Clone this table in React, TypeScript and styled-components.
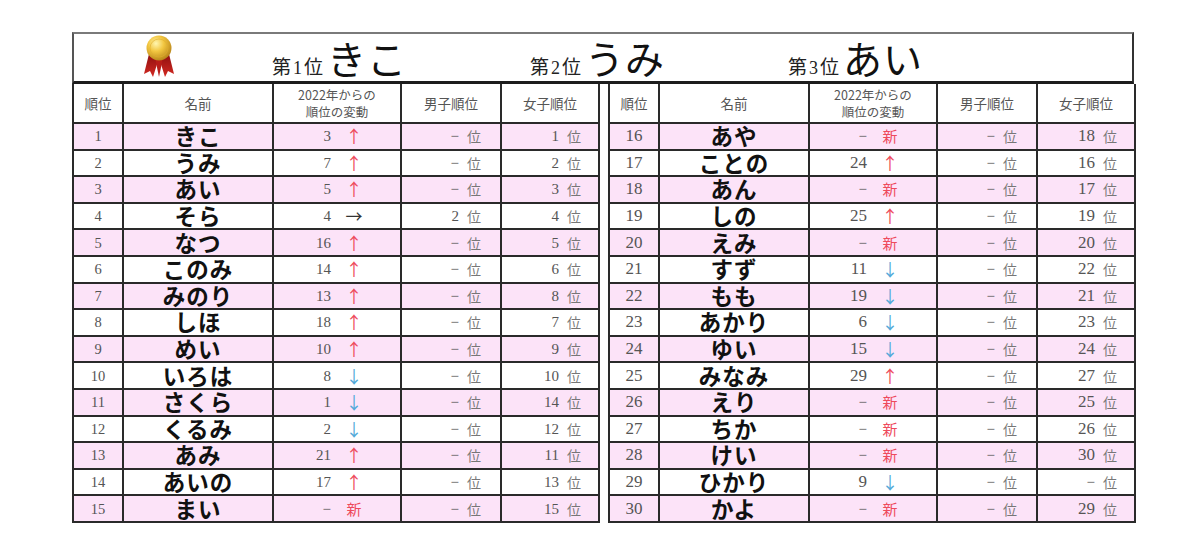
import React from "react";
import styled, { createGlobalStyle } from "styled-components";

type Move = "up" | "down" | "flat" | "new";

type Row = {
  rank: number;
  name: string;
  prev: number | null;
  move: Move;
  boy: number | null;
  girl: number | null;
};

const GlobalStyle = createGlobalStyle`
  html, body {
    margin: 0;
    padding: 0;
    background: #ffffff;
  }
  body {
    font-family: "Liberation Serif", "Noto Sans CJK JP", serif;
    color: #222;
  }
`;

const Page = styled.div`
  padding: 32px 0 0 72px;
  width: 1062px;
`;

const TitleBand = styled.div`
  box-sizing: border-box;
  height: 52px;
  border-top: 2px solid #7a7a7a;
  border-left: 2px solid #555;
  border-right: 2px solid #333;
  border-bottom: 3px solid #1c1c1c;
  display: flex;
  align-items: flex-end;
  padding: 0 0 2px 66px;
`;

const Medal = styled.div`
  width: 38px;
  height: 44px;
  margin-bottom: 1px;
  margin-right: 94px;
`;

const Podium = styled.div`
  width: 258px;
  display: flex;
  align-items: baseline;
  font-family: "Noto Sans CJK JP", sans-serif;
`;

const PodiumLabel = styled.span`
  font-size: 19px;
  color: #222;
  margin-right: 4px;
  & b {
    font-family: "Liberation Serif", serif;
    font-weight: 400;
    font-size: 18px;
    margin: 0 2px;
  }
`;

const PodiumName = styled.span`
  font-size: 39px;
  line-height: 44px;
  color: #111;
  letter-spacing: 1px;
`;

const Tables = styled.div`
  display: grid;
  grid-template-columns: 526px 526px;
  column-gap: 10px;
`;

const Table = styled.table`
  width: 526px;
  table-layout: fixed;
  border-collapse: collapse;
  border-left: 2px solid #2a2a2a;
  border-right: 2px solid #2a2a2a;
  border-bottom: 2px solid #2a2a2a;
`;

const HeadCell = styled.th`
  height: 38px;
  padding: 0;
  border: 2px solid #2a2a2a;
  border-top: none;
  font-family: "Noto Sans CJK JP", sans-serif;
  font-weight: 400;
  font-size: 13.5px;
  line-height: 18px;
  color: #555;
  text-align: center;
  background: #fff;
`;

const SmallHead = styled.span`
  display: block;
  font-size: 12.5px;
  line-height: 17px;
`;

const BodyRow = styled.tr<{ $pink: boolean }>`
  background: ${({ $pink }) => ($pink ? "#fce3f8" : "#ffffff")};
`;

const Cell = styled.td`
  padding: 0;
  border: 2px solid #2a2a2a;
  vertical-align: middle;
`;

const CellBox = styled.div<{ $right?: boolean; $pad?: number }>`
  height: 24.6px;
  display: flex;
  align-items: center;
  justify-content: ${({ $right }) => ($right ? "flex-end" : "center")};
  padding-right: ${({ $pad }) => $pad ?? 0}px;
  white-space: nowrap;
  color: #555;
`;

const RankNum = styled.span<{ $big: boolean }>`
  font-family: "Liberation Serif", serif;
  font-size: ${({ $big }) => ($big ? 17 : 14.5)}px;
  line-height: 20px;
  color: #555;
`;

const Name = styled.span`
  font-family: "Noto Sans CJK JP", sans-serif;
  font-weight: 700;
  font-size: 22.5px;
  line-height: 24px;
  margin-bottom: 2px;
  color: #111;
  letter-spacing: 1px;
`;

const Num = styled.span<{ $big: boolean }>`
  font-family: "Liberation Serif", serif;
  font-size: ${({ $big }) => ($big ? 17 : 15)}px;
  line-height: 20px;
  color: #555;
`;

const Dash = styled.span`
  font-family: "Liberation Serif", serif;
  font-size: 15px;
  line-height: 20px;
  color: #555;
`;

const Mark = styled.span<{ $move: Move }>`
  width: 20px;
  margin-left: 13px;
  text-align: center;
  font-family: "Noto Sans CJK JP", sans-serif;
  font-size: ${({ $move }) => ($move === "new" ? 15 : 17)}px;
  line-height: 20px;
  color: ${({ $move }) =>
    $move === "up" || $move === "new"
      ? "#ee4a5c"
      : $move === "down"
      ? "#52a9d9"
      : "#333"};
`;

const Unit = styled.span`
  font-family: "Noto Sans CJK JP", sans-serif;
  font-size: 14px;
  line-height: 20px;
  color: #777;
  margin-left: 8px;
`;

const left: Row[] = [
  { rank: 1, name: "きこ", prev: 3, move: "up", boy: null, girl: 1 },
  { rank: 2, name: "うみ", prev: 7, move: "up", boy: null, girl: 2 },
  { rank: 3, name: "あい", prev: 5, move: "up", boy: null, girl: 3 },
  { rank: 4, name: "そら", prev: 4, move: "flat", boy: 2, girl: 4 },
  { rank: 5, name: "なつ", prev: 16, move: "up", boy: null, girl: 5 },
  { rank: 6, name: "このみ", prev: 14, move: "up", boy: null, girl: 6 },
  { rank: 7, name: "みのり", prev: 13, move: "up", boy: null, girl: 8 },
  { rank: 8, name: "しほ", prev: 18, move: "up", boy: null, girl: 7 },
  { rank: 9, name: "めい", prev: 10, move: "up", boy: null, girl: 9 },
  { rank: 10, name: "いろは", prev: 8, move: "down", boy: null, girl: 10 },
  { rank: 11, name: "さくら", prev: 1, move: "down", boy: null, girl: 14 },
  { rank: 12, name: "くるみ", prev: 2, move: "down", boy: null, girl: 12 },
  { rank: 13, name: "あみ", prev: 21, move: "up", boy: null, girl: 11 },
  { rank: 14, name: "あいの", prev: 17, move: "up", boy: null, girl: 13 },
  { rank: 15, name: "まい", prev: null, move: "new", boy: null, girl: 15 },
];

const right: Row[] = [
  { rank: 16, name: "あや", prev: null, move: "new", boy: null, girl: 18 },
  { rank: 17, name: "ことの", prev: 24, move: "up", boy: null, girl: 16 },
  { rank: 18, name: "あん", prev: null, move: "new", boy: null, girl: 17 },
  { rank: 19, name: "しの", prev: 25, move: "up", boy: null, girl: 19 },
  { rank: 20, name: "えみ", prev: null, move: "new", boy: null, girl: 20 },
  { rank: 21, name: "すず", prev: 11, move: "down", boy: null, girl: 22 },
  { rank: 22, name: "もも", prev: 19, move: "down", boy: null, girl: 21 },
  { rank: 23, name: "あかり", prev: 6, move: "down", boy: null, girl: 23 },
  { rank: 24, name: "ゆい", prev: 15, move: "down", boy: null, girl: 24 },
  { rank: 25, name: "みなみ", prev: 29, move: "up", boy: null, girl: 27 },
  { rank: 26, name: "えり", prev: null, move: "new", boy: null, girl: 25 },
  { rank: 27, name: "ちか", prev: null, move: "new", boy: null, girl: 26 },
  { rank: 28, name: "けい", prev: null, move: "new", boy: null, girl: 30 },
  { rank: 29, name: "ひかり", prev: 9, move: "down", boy: null, girl: null },
  { rank: 30, name: "かよ", prev: null, move: "new", boy: null, girl: 29 },
];

const markText: Record<Move, string> = {
  up: "↑",
  down: "↓",
  flat: "→",
  new: "新",
};

function MedalIcon() {
  return (
    <svg width="38" height="44" viewBox="0 0 38 44">
      <defs>
        <radialGradient id="gold" cx="0.38" cy="0.32" r="0.7">
          <stop offset="0" stopColor="#fff6b0" />
          <stop offset="0.45" stopColor="#f2c640" />
          <stop offset="1" stopColor="#b9861a" />
        </radialGradient>
        <linearGradient id="ribbon" x1="0" y1="0" x2="0" y2="1">
          <stop offset="0" stopColor="#8e0f0f" />
          <stop offset="1" stopColor="#d42a22" />
        </linearGradient>
      </defs>
      <path d="M9 20 L4 40 L10 37 L13 43 L19 24 Z" fill="url(#ribbon)" />
      <path d="M29 20 L34 40 L28 37 L25 43 L19 24 Z" fill="url(#ribbon)" />
      <path d="M15 24 L19 43 L23 24 Z" fill="#b81c18" />
      <circle cx="19" cy="14" r="12.5" fill="url(#gold)" />
      <circle cx="19" cy="14" r="9" fill="none" stroke="#e0ad2e" strokeWidth="1" opacity="0.6" />
    </svg>
  );
}

function RankTable({ rows, big }: { rows: Row[]; big: boolean }) {
  return (
    <Table>
      <colgroup>
        <col style={{ width: 50 }} />
        <col style={{ width: 150 }} />
        <col style={{ width: 128 }} />
        <col style={{ width: 100 }} />
        <col style={{ width: 98 }} />
      </colgroup>
      <thead>
        <tr>
          <HeadCell>順位</HeadCell>
          <HeadCell>名前</HeadCell>
          <HeadCell>
            <SmallHead>2022年からの</SmallHead>
            <SmallHead>順位の変動</SmallHead>
          </HeadCell>
          <HeadCell>男子順位</HeadCell>
          <HeadCell>女子順位</HeadCell>
        </tr>
      </thead>
      <tbody>
        {rows.map((r, i) => (
          <BodyRow key={r.rank} $pink={i % 2 === 0}>
            <Cell>
              <CellBox>
                <RankNum $big={big}>{r.rank}</RankNum>
              </CellBox>
            </Cell>
            <Cell>
              <CellBox>
                <Name>{r.name}</Name>
              </CellBox>
            </Cell>
            <Cell>
              <CellBox $right $pad={36}>
                {r.prev === null ? <Dash>−</Dash> : <Num $big={big}>{r.prev}</Num>}
                <Mark $move={r.move}>{markText[r.move]}</Mark>
              </CellBox>
            </Cell>
            <Cell>
              <CellBox $right $pad={19}>
                {r.boy === null ? <Dash>−</Dash> : <Num $big={big}>{r.boy}</Num>}
                <Unit>位</Unit>
              </CellBox>
            </Cell>
            <Cell>
              <CellBox $right $pad={17}>
                {r.girl === null ? <Dash>−</Dash> : <Num $big={big}>{r.girl}</Num>}
                <Unit>位</Unit>
              </CellBox>
            </Cell>
          </BodyRow>
        ))}
      </tbody>
    </Table>
  );
}

export default function App() {
  return (
    <>
      <GlobalStyle />
      <Page>
        <TitleBand>
          <Medal>
            <MedalIcon />
          </Medal>
          <Podium>
            <PodiumLabel>
              第<b>1</b>位
            </PodiumLabel>
            <PodiumName>きこ</PodiumName>
          </Podium>
          <Podium>
            <PodiumLabel>
              第<b>2</b>位
            </PodiumLabel>
            <PodiumName>うみ</PodiumName>
          </Podium>
          <Podium>
            <PodiumLabel>
              第<b>3</b>位
            </PodiumLabel>
            <PodiumName>あい</PodiumName>
          </Podium>
        </TitleBand>
        <Tables>
          <RankTable rows={left} big={false} />
          <RankTable rows={right} big={true} />
        </Tables>
      </Page>
    </>
  );
}
